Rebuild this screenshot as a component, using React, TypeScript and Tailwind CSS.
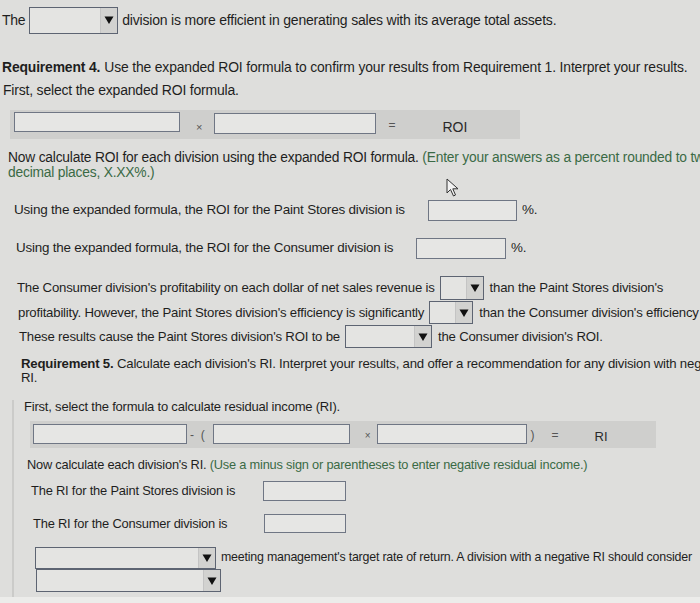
import React from "react";

const Drop = ({ w, h = 22 }: { w: number; h?: number }) => (
  <div
    className="flex items-stretch border border-[#5d6472] bg-[#e4e4e2] shrink-0"
    style={{ width: w, height: h }}
  >
    <div className="flex-1" />
    <div className="w-[17px] flex items-center justify-center bg-[#d2d2d0] border-l border-[#c4c4c4]">
      <svg width="10" height="10" viewBox="0 0 10 10">
        <path d="M0.5 1.5 H9.5 L5 9 Z" fill="#111" />
      </svg>
    </div>
  </div>
);

const Box = ({ w, h = 20 }: { w: number; h?: number }) => (
  <div
    className="border border-[#6f7684] bg-[#e6e6e4] shrink-0"
    style={{ width: w, height: h }}
  />
);

export default function App() {
  return (
    <div
      className="relative w-[700px] h-[603px] overflow-hidden bg-[#dededc] text-[#1e1e1e] flex flex-col"
      style={{ fontFamily: '"Liberation Sans", Arial, sans-serif' }}
    >
      {/* row 1 */}
      <div className="mt-[6px] h-[28px] flex items-center text-[14px] pl-[2px] whitespace-nowrap">
        <span className="mr-[4px] tracking-[-0.3px]">The</span>
        <Drop w={89} h={27} />
        <span className="ml-[4px] tracking-[-0.2px]">
          division is more efficient in generating sales with its average total assets.
        </span>
      </div>

      {/* Req 4 */}
      <div className="mt-[24px] h-[18px] flex items-center text-[13.9px] pl-[2px] tracking-[-0.15px] whitespace-nowrap">
        <span className="font-bold">Requirement 4.</span>
        <span className="ml-[4px]">
          Use the expanded ROI formula to confirm your results from Requirement 1. Interpret your results.
        </span>
      </div>
      <div className="mt-[5px] h-[18px] flex items-center text-[14px] pl-[3px] tracking-[-0.2px]">
        First, select the expanded ROI formula.
      </div>

      {/* ROI formula band */}
      <div className="mt-[11px] ml-[10px] w-[510px] h-[29px] bg-[#cfcfcd] flex items-start text-[12px] text-[#555]">
        <div className="ml-[4px] mt-[2px]">
          <Box w={166} h={20} />
        </div>
        <span className="ml-[16px] mt-[9px] text-[11px]">×</span>
        <div className="ml-[12px] mt-[3px]">
          <Box w={162} h={21} />
        </div>
        <span className="ml-[12px] mt-[6px]">=</span>
        <span className="ml-[47px] mt-[7px] text-[14px] text-[#2a2a2a]">ROI</span>
      </div>

      {/* Now calculate ROI */}
      <div className="mt-[11px] pl-[8px] text-[13.8px] leading-[15px] tracking-[-0.2px] whitespace-nowrap">
        <div>
          Now calculate ROI for each division using the expanded ROI formula.{" "}
          <span className="text-[#3a6a45]">(Enter your answers as a percent rounded to two</span>
        </div>
        <div className="text-[#3a6a45]">decimal places, X.XX%.)</div>
      </div>

      {/* Paint ROI */}
      <div className="mt-[19px] h-[22px] flex items-center pl-[14px] text-[13.5px] tracking-[-0.2px] whitespace-nowrap">
        <span className="w-[414px]">
          Using the expanded formula, the ROI for the Paint Stores division is
        </span>
        <Box w={89} h={21} />
        <span className="ml-[5px]">%.</span>
      </div>

      {/* Consumer ROI */}
      <div className="mt-[16px] h-[22px] flex items-center pl-[16px] text-[13.4px] tracking-[-0.2px] whitespace-nowrap">
        <span className="w-[400px]">
          Using the expanded formula, the ROI for the Consumer division is
        </span>
        <Box w={90} h={21} />
        <span className="ml-[5px]">%.</span>
      </div>

      {/* Consumer profitability */}
      <div className="mt-[17px] h-[24px] flex items-center pl-[17px] text-[13.2px] tracking-[-0.2px] whitespace-nowrap">
        <span>
          The Consumer division's profitability on each dollar of net sales revenue is
        </span>
        <div className="ml-[5px]">
          <Drop w={44} h={24} />
        </div>
        <span className="ml-[6px]">than the Paint Stores division's</span>
      </div>
      <div className="mt-[1px] h-[23px] flex items-center pl-[18px] text-[13.2px] tracking-[-0.2px] whitespace-nowrap">
        <span>
          profitability. However, the Paint Stores division's efficiency is significantly
        </span>
        <div className="ml-[5px]">
          <Drop w={44} h={23} />
        </div>
        <span className="ml-[6px]">than the Consumer division's efficiency</span>
      </div>
      <div className="mt-[1px] h-[23px] flex items-center pl-[19px] text-[13.2px] tracking-[-0.2px] whitespace-nowrap">
        <span>These results cause the Paint Stores division's ROI to be</span>
        <div className="ml-[5px]">
          <Drop w={87} h={23} />
        </div>
        <span className="ml-[6px]">the Consumer division's ROI.</span>
      </div>

      {/* Req 5 */}
      <div className="mt-[9px] pl-[21px] text-[13.2px] leading-[14px] tracking-[-0.2px] whitespace-nowrap">
        <div>
          <span className="font-bold">Requirement 5.</span> Calculate each division's RI. Interpret your
          results, and offer a recommendation for any division with negative
        </div>
        <div>RI.</div>
      </div>

      <div className="mt-[15px] h-[14px] flex items-center pl-[24px] text-[13px] tracking-[-0.2px] whitespace-nowrap">
        First, select the formula to calculate residual income (RI).
      </div>

      {/* RI formula band */}
      <div className="mt-[7px] ml-[30px] w-[626px] h-[27px] bg-[#cfcfcd] flex items-start text-[12px] text-[#555]">
        <div className="ml-[3px] mt-[3px]">
          <Box w={154} h={20} />
        </div>
        <span className="ml-[3px] mt-[5px]">-&nbsp;&nbsp;(</span>
        <div className="ml-[8px] mt-[3px]">
          <Box w={137} h={20} />
        </div>
        <span className="ml-[15px] mt-[7px] text-[10px]">×</span>
        <div className="ml-[6px] mt-[3px]">
          <Box w={150} h={20} />
        </div>
        <span className="ml-[4px] mt-[5px]">)</span>
        <span className="ml-[17px] mt-[5px]">=</span>
        <span className="ml-[36px] mt-[6px] text-[13px] text-[#2a2a2a]">RI</span>
      </div>

      <div className="mt-[10px] h-[14px] flex items-center pl-[27px] text-[12.8px] tracking-[-0.2px] whitespace-nowrap">
        Now calculate each division's RI.&nbsp;
        <span className="text-[#3a6a45]">
          (Use a minus sign or parentheses to enter negative residual income.)
        </span>
      </div>

      <div className="mt-[8px] h-[21px] flex items-center pl-[31px] text-[12.9px] tracking-[-0.2px] whitespace-nowrap">
        <span className="w-[232px]">The RI for the Paint Stores division is</span>
        <Box w={83} h={20} />
      </div>

      <div className="mt-[13px] h-[19px] flex items-center pl-[33px] text-[12.9px] tracking-[-0.2px] whitespace-nowrap">
        <span className="w-[231px]">The RI for the Consumer division is</span>
        <Box w={82} h={19} />
      </div>

      <div className="mt-[13px] h-[23px] flex items-center pl-[35px] text-[12.4px] tracking-[-0.2px] whitespace-nowrap">
        <Drop w={181} h={22} />
        <span className="ml-[5px]">
          meeting management's target rate of return. A division with a negative RI should consider
        </span>
      </div>
      <div className="h-[23px] flex items-center pl-[36px]">
        <Drop w={185} h={23} />
      </div>

      {/* left page edge line */}
      <div className="absolute left-[12px] top-[400px] w-[2px] h-[200px] bg-[#cbcbc9]" />
      <div className="absolute left-0 bottom-0 w-full h-[6px] bg-[#ececea]" />

      {/* mouse cursor */}
      <svg
        className="absolute left-[446px] top-[178px]"
        width="14"
        height="20"
        viewBox="0 0 14 20"
      >
        <path
          d="M1 1 L1 15 L4.5 11.5 L7.5 18 L9.5 17 L6.8 10.8 L12 10.8 Z"
          fill="#f2f2f2"
          stroke="#333"
          strokeWidth="1"
          strokeLinejoin="round"
        />
      </svg>
    </div>
  );
}
